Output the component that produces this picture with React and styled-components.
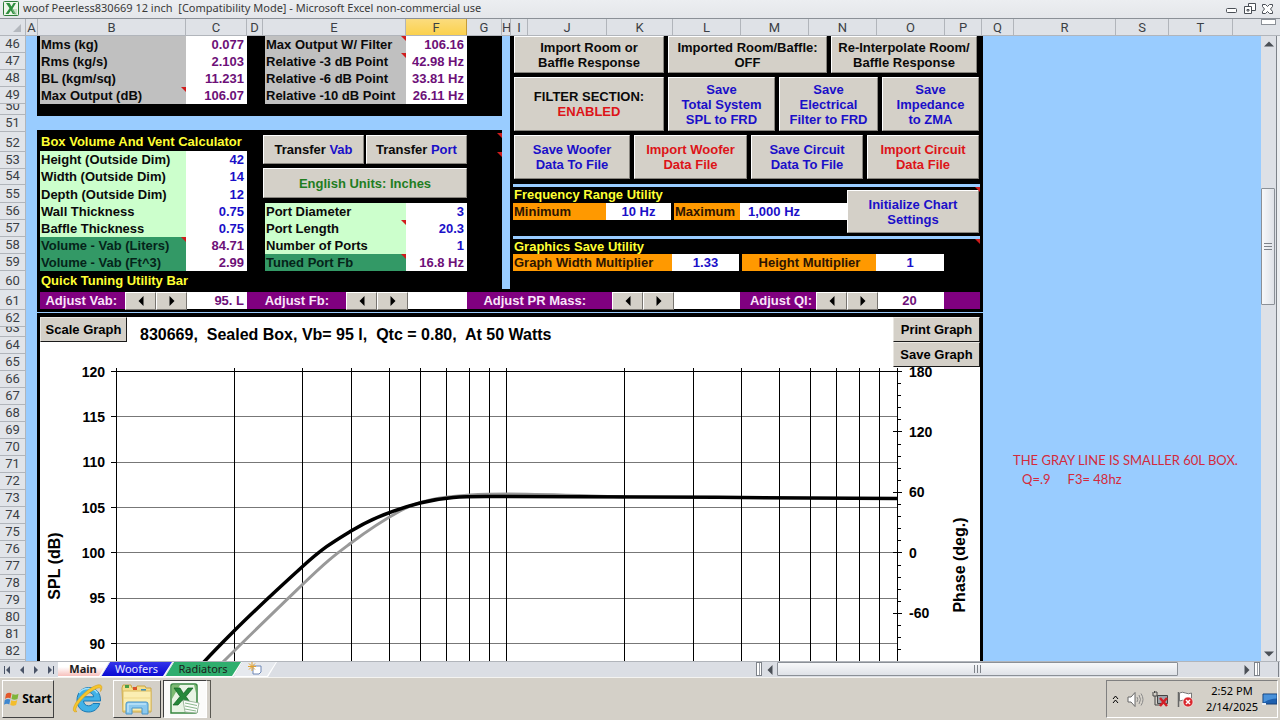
import React from "react";
import styled, { createGlobalStyle, css } from "styled-components";

const GlobalStyle = createGlobalStyle`
  * {
    box-sizing: border-box;
  }
  body {
    margin: 0;
    background: #d4d0c8;
    font-family: "Liberation Sans", Arial, sans-serif;
  }
  button {
    font: inherit;
    color: inherit;
    margin: 0;
    padding: 0;
  }
`;

const colors = {
  blue: "#1a0fc8",
  purple: "#6d1078",
  red: "#dd1418",
  green: "#1f7d1f",
  sky: "#99ccff",
  face: "#d4d0c8"
};

const Window = styled.div`
  display: flex;
  flex-direction: column;
  height: 100vh;
  overflow: hidden;
`;

const TitleBar = styled.header`
  display: flex;
  align-items: center;
  flex: none;
  height: 19px;
  padding: 0 3px;
  background: linear-gradient(#eceef1, #e4e6ea);
  border-bottom: 1px solid #8b9097;
`;

const TitleText = styled.h1`
  flex: 1;
  margin: 0 0 2px 4px;
  color: #3a3a3a;
  font: 400 11px/16px "Noto Sans", "Open Sans", sans-serif;
  white-space: pre;
`;

const WindowButton = styled.button`
  display: flex;
  width: 18px;
  height: 14px;
  align-items: center;
  justify-content: center;
  border: 0;
  background: none;
`;

const ColumnHeads = styled.div`
  display: flex;
  flex: none;
  height: 17px;
  background: #dfe2e7;
  border-bottom: 1px solid #b1b5bb;
`;

const Corner = styled.div`
  display: flex;
  align-items: flex-end;
  justify-content: flex-end;
  width: 26px;
  padding: 0 4px 3px 0;
  border-right: 1px solid #b1b5bb;
`;

const ColumnHead = styled.div`
  flex: none;
  width: ${props => props.$width}px;
  overflow: hidden;
  border-right: 1px solid #b1b5bb;
  color: #3b3f45;
  font: 13px/17px Roboto, "Liberation Sans", sans-serif;
  text-align: center;
  ${props =>
    props.$active &&
    css`
      background: linear-gradient(#fbdc7e, #fbd14d);
      border-right-color: #c59b36;
    `}
`;

const SplitBox = styled.div`
  width: 15px;
  height: 6px;
  margin-left: auto;
  margin-right: 4px;
  border: 1px solid #8b9097;
  background: #fff;
`;

const Sheet = styled.main`
  display: flex;
  flex: 1;
  min-height: 0;
  overflow: hidden;
  background: ${colors.sky};
`;

const RowHeads = styled.div`
  flex: none;
  width: 26px;
  background: #e1e4e9;
  border-right: 1px solid #b1b5bb;
`;

const RowHead = styled.div`
  display: flex;
  align-items: flex-end;
  justify-content: center;
  height: ${props => props.$height}px;
  overflow: hidden;
  border-bottom: 1px solid #b1b5bb;
  color: #3b3f45;
  font: 13px/16px Roboto, "Liberation Sans", sans-serif;
`;

const Board = styled.div`
  display: flex;
  flex-direction: column;
  flex: none;
  width: 946px;
  margin-left: 11px;
  font-size: 13px;
  font-weight: 700;
  line-height: 17px;
`;

const Upper = styled.div`
  display: flex;
  flex: none;
  gap: 8px;
  height: 253px;
`;

const LeftSide = styled.div`
  display: flex;
  flex-direction: column;
  gap: 14px;
  width: 465px;
`;

const ResultsPanel = styled.section`
  display: flex;
  flex: none;
  gap: 18px;
  height: 80px;
  padding-left: 3px;
  background: #000;
`;

const CalculatorPanel = styled.section`
  position: relative;
  z-index: 1;
  display: flex;
  flex: 1;
  min-height: 0;
  gap: 16px;
  padding: 2px 0 0 3px;
  background: #000;
`;

const Heading = styled.h2`
  margin: 0;
  padding-left: 1px;
  color: #ffff33;
  font-size: 13px;
  line-height: ${props => props.$line || 19}px;
  white-space: nowrap;
`;

const DataTable = styled.table`
  align-self: flex-start;
  table-layout: fixed;
  border-collapse: collapse;
`;

const labelFills = {
  gray: "#c0c0c0",
  mint: "#ccffcc",
  pine: "#339966"
};

const LabelCell = styled.th`
  position: relative;
  width: ${props => props.$width}px;
  height: ${props => props.$height || 17}px;
  padding: 0 0 0 1px;
  background: ${props => labelFills[props.$fill]};
  color: ${props => (props.$fill === "pine" ? "#05241a" : "#0a0a0a")};
  text-align: left;
  vertical-align: bottom;
  white-space: nowrap;
`;

const ValueCell = styled.td`
  width: 61px;
  padding: 0 3px 0 0;
  background: #fff;
  color: ${props => colors[props.$color]};
  text-align: right;
  vertical-align: bottom;
  white-space: nowrap;
`;

const CommentMark = styled.i`
  position: absolute;
  top: ${props => props.$top || 0}px;
  right: 0;
  border-top: 5px solid #d01c1c;
  border-left: 5px solid transparent;
`;

const CalculatorColumn = styled.div`
  width: ${props => props.$width}px;
`;

const ButtonStack = styled.div`
  display: flex;
  flex-direction: column;
  gap: 4px;
  margin: 3px 0 5px;
`;

const ButtonRow = styled.div`
  display: flex;
  gap: ${props => props.$gap || 4}px;
`;

const PortReadings = styled.div`
  padding-left: 2px;
`;

const PanelButton = styled.button`
  flex: ${props => (props.$width ? "none" : "1")};
  width: ${props => (props.$width ? `${props.$width}px` : "auto")};
  height: ${props => props.$height}px;
  border: 1px solid;
  border-color: #fff #87847e #87847e #fff;
  background: ${colors.face};
  color: ${props => colors[props.$color] || "#0a0a0a"};
  line-height: 15px;
  white-space: pre-line;
`;

const Tint = styled.span`
  color: ${props => colors[props.$color]};
`;

const RightSide = styled.div`
  flex: 1;
  padding: 0 3px;
  background: #000;
`;

const ActionGrid = styled.div`
  display: flex;
  flex-direction: column;
  gap: 4px;
  padding-left: 1px;
`;

const Utility = styled.section`
  position: relative;
  border-top: 3px solid ${colors.sky};
  margin-top: ${props => props.$space}px;
`;

const UtilityBody = styled.div`
  display: flex;
  height: 49px;
  justify-content: space-between;
`;

const UtilityFields = styled.div`
  display: flex;
  height: 17px;
`;

const FieldLabel = styled.span`
  width: ${props => props.$width}px;
  padding-left: 1px;
  margin-left: ${props => (props.$apart ? 3 : 0)}px;
  background: #ff9900;
  color: #2c1400;
  text-align: ${props => (props.$centered ? "center" : "left")};
  white-space: nowrap;
`;

const FieldValue = styled.output`
  width: ${props => props.$width}px;
  padding: 0 8px;
  background: #fff;
  color: ${colors.blue};
  text-align: ${props => props.$align || "center"};
`;

const InitButton = styled(PanelButton)`
  margin: 3px 1px 0 0;
`;

const TuningBar = styled.section`
  display: flex;
  flex: none;
  height: 23px;
  margin-bottom: 1px;
  padding: 3px 3px 0;
  background: #000;
`;

const TuningLabel = styled.span`
  width: ${props => props.$width}px;
  height: 17px;
  padding-right: ${props => props.$pad}px;
  background: #800080;
  color: #f9e4f9;
  text-align: right;
  white-space: nowrap;
`;

const TuningValue = styled.output`
  width: ${props => props.$width}px;
  height: 17px;
  padding-right: 3px;
  background: #fff;
  color: ${colors.purple};
  text-align: ${props => props.$align || "right"};
`;

const SpinButton = styled.button`
  display: flex;
  width: 31px;
  height: 18px;
  align-items: center;
  justify-content: center;
  border: 1px solid;
  border-color: #fff #77746f #77746f #fff;
  background: ${colors.face};
`;

const Graph = styled.section`
  flex: 1;
  min-height: 0;
  overflow: hidden;
  border: solid #000;
  border-width: 4px 3px 0;
  background: #fff;
`;

/* shorter than its buttons: the lower one lies over the top of the chart */
const GraphHeader = styled.div`
  position: relative;
  z-index: 1;
  display: flex;
  height: 43px;
  align-items: flex-start;
`;

const GraphTitle = styled.h2`
  flex: 1;
  margin: 8px 0 0 13px;
  font-size: 16px;
  line-height: 20px;
  white-space: pre;
`;

const GraphButton = styled.button`
  display: block;
  width: 87px;
  height: 25px;
  border: 1px solid;
  border-color: #e9e7e2 #1a1a1a #1a1a1a #e9e7e2;
  background: ${colors.face};
  line-height: 15px;
`;

const Chart = styled.svg`
  display: block;
  width: 100%;
  height: 301px;
  font: 700 14px "Liberation Sans", Arial, sans-serif;
`;

const Notes = styled.aside`
  flex: 1;
  min-width: 0;
  padding: 415px 0 0 30px;
  color: #d42a3c;
  font: 13px/19px Lato, "Liberation Sans", sans-serif;
  white-space: nowrap;
  p {
    margin: 0;
  }
`;

const NoteRow = styled.div`
  display: flex;
  gap: 17px;
  padding-left: 9px;
`;

const VerticalScroll = styled.div`
  display: flex;
  flex: none;
  flex-direction: column;
  width: 19px;
  border-right: 3px solid #eceef1;
  background: #dde0e6;
  box-shadow: inset -1px 0 #7d8289;
`;

const ScrollArrow = styled.button`
  display: flex;
  flex: none;
  width: 15px;
  height: 15px;
  align-items: center;
  justify-content: center;
  border: 0;
  background: none;
`;

const VerticalTrack = styled.div`
  flex: 1;
  padding-top: 137px;
`;

const VerticalThumb = styled.div`
  display: flex;
  width: 14px;
  height: 117px;
  align-items: center;
  justify-content: center;
  border: 1px solid #8b9097;
  border-radius: 1px;
  background: linear-gradient(90deg, #f7f8fa, #dfe2e8);
`;

const SheetBar = styled.nav`
  display: flex;
  flex: none;
  height: 16px;
  background: #dbdee4;
  border-top: 1px solid #b1b5bb;
`;

const SheetNav = styled.div`
  display: flex;
  width: 58px;
  align-items: center;
  justify-content: space-around;
`;

const NavButton = styled.button`
  display: flex;
  border: 0;
  background: none;
`;

const tabFills = {
  Main: "linear-gradient(#fff 35%, #f7c0bc)",
  Woofers: "linear-gradient(#3434ea, #0a0ad2)",
  Radiators: "linear-gradient(#2fae6e, #2fae6e)",
  New: "#e6e9ee"
};

const TabWrap = styled.span`
  width: ${props => props.$width}px;
  height: 15px;
  margin-right: -8px;
  padding-right: 1px;
  background: #fff;
  clip-path: polygon(
    ${props => (props.$first ? 0 : 9)}px 0,
    100% 0,
    calc(100% - 9px) 100%,
    0 100%
  );
`;

const Tab = styled.button`
  display: block;
  width: 100%;
  height: 14px;
  border: 0;
  background: ${props => tabFills[props.$name]};
  clip-path: polygon(
    ${props => (props.$name === "Main" ? 0 : 9)}px 0,
    100% 0,
    calc(100% - 9px) 100%,
    0 100%
  );
  color: ${props => (props.$name === "Woofers" ? "#e8e8ff" : "#1c1c1c")};
  font: ${props => (props.$name === "Main" ? 700 : 400)} 11px/14px "Noto Sans",
    sans-serif;
  text-align: center;
`;

const HorizontalScroll = styled.div`
  display: flex;
  flex: 0 1 523px;
  margin-left: auto;
  margin-right: 1px;
  padding-right: 18px;
  border-right: 1px solid #7d8289;
`;

const Splitter = styled.div`
  flex: none;
  width: 6px;
  height: 14px;
  border: 1px solid #7d8289;
  background: linear-gradient(90deg, #fff 50%, #9a9ea5 50%, #9a9ea5 75%, #fff 75%);
`;

const HorizontalThumb = styled.div`
  display: flex;
  flex: 0 1 401px;
  height: 14px;
  align-items: center;
  justify-content: center;
  border: 1px solid #8b9097;
  border-radius: 1px;
  background: linear-gradient(#f7f8fa, #dfe2e8);
`;

const HorizontalGap = styled.div`
  flex: 1;
`;

const Taskbar = styled.footer`
  display: flex;
  flex: none;
  height: 43px;
  padding: 2px 2px 2px;
  border-top: 1px solid #f4f3f0;
  background: ${colors.face};
`;

const TaskButton = styled.button`
  display: flex;
  width: ${props => props.$width}px;
  height: 38px;
  margin-right: ${props => props.$after || 0}px;
  align-items: center;
  justify-content: center;
  gap: 2px;
  border: ${props => (props.$flat ? 0 : "1px solid")};
  border-color: ${props =>
    props.$pressed ? "#404040 #fff #fff #404040" : "#fff #404040 #404040 #fff"};
  background: ${props => (props.$pressed ? "#fbfbfa" : "none")};
  font: 700 12px/16px "Noto Sans", sans-serif;
`;

const StackEdge = styled.span`
  width: 4px;
  height: 38px;
  border: solid #5a5852;
  border-width: 1px 1px 0 0;
`;

const Tray = styled.div`
  display: flex;
  flex: none;
  width: 172px;
  height: 38px;
  margin-left: auto;
  align-items: center;
  border: 1px solid;
  border-color: #808080 #fff #fff #808080;
`;

const TrayIcons = styled.div`
  display: flex;
  flex: 1;
  align-items: center;
  justify-content: space-between;
  padding: 0 8px 0 5px;
`;

const Clock = styled.time`
  width: 60px;
  font: 11px/16px "Noto Sans", sans-serif;
  text-align: center;
`;

const columns = [
  ["A", 12], ["B", 148], ["C", 61], ["D", 16], ["E", 143], ["F", 61],
  ["G", 35], ["H", 9], ["I", 17], ["J", 79], ["K", 66], ["L", 68],
  ["M", 68], ["N", 68], ["O", 68], ["P", 37], ["Q", 32], ["R", 102],
  ["S", 53], ["T", 64]
];

const oddHeights = { 50: 11, 52: 20, 54: 16, 55: 18, 60: 19, 61: 20, 63: 10 };
const rows = Array.from({ length: 37 }, (_, i) => ({
  number: 46 + i,
  height: oddHeights[46 + i] || 17
}));

const driverRows = [
  { label: "Mms (kg)", value: "0.077" },
  { label: "Rms (kg/s)", value: "2.103" },
  { label: "BL (kgm/sq)", value: "11.231" },
  { label: "Max Output (dB)", value: "106.07", mark: true }
];

const outputRows = [
  { label: "Max Output W/ Filter", value: "106.16", mark: true },
  { label: "Relative -3 dB Point", value: "42.98 Hz", mark: true },
  { label: "Relative -6 dB Point", value: "33.81 Hz" },
  { label: "Relative -10 dB Point", value: "26.11 Hz" }
];

const boxRows = [
  { label: "Height (Outside Dim)", value: "42", input: true },
  { label: "Width (Outside Dim)", value: "14", input: true },
  { label: "Depth (Outside Dim)", value: "12", input: true, height: 18 },
  { label: "Wall Thickness", value: "0.75", input: true },
  { label: "Baffle Thickness", value: "0.75", input: true },
  { label: "Volume - Vab (Liters)", value: "84.71", mark: true },
  { label: "Volume - Vab (Ft^3)", value: "2.99" }
];

const portRows = [
  { label: "Port Diameter", value: "3", input: true },
  { label: "Port Length", value: "20.3", input: true, mark: true },
  { label: "Number of Ports", value: "1", input: true },
  { label: "Tuned Port Fb", value: "16.8 Hz", mark: true }
];

const Readings = ({ rows: items, width, plain }) => (
  <DataTable>
    <tbody>
      {items.map(item => (
        <tr key={item.label}>
          <LabelCell
            scope="row"
            $width={width}
            $height={item.height}
            $fill={plain ? "gray" : item.input ? "mint" : "pine"}
          >
            {item.label}
            {item.mark && <CommentMark />}
          </LabelCell>
          <ValueCell $color={item.input ? "blue" : "purple"}>
            {item.value}
          </ValueCell>
        </tr>
      ))}
    </tbody>
  </DataTable>
);

const Arrow = ({ dir, size = 8, fill = "#000" }) => {
  const paths = {
    left: "M6 0V8L2 4Z",
    right: "M2 0V8L6 4Z",
    up: "M0 6H8L4 2Z",
    down: "M0 2H8L4 6Z"
  };
  return (
    <svg width={size} height={size} viewBox="0 0 8 8" aria-hidden="true">
      <path d={paths[dir]} fill={fill} />
    </svg>
  );
};

const Spinner = ({ name }) => (
  <>
    <SpinButton aria-label={`Decrease ${name}`}>
      <Arrow dir="left" size={10} />
    </SpinButton>
    <SpinButton aria-label={`Increase ${name}`}>
      <Arrow dir="right" size={10} />
    </SpinButton>
  </>
);

const ExcelSmall = () => (
  <svg width="16" height="16" viewBox="0 0 16 16" aria-hidden="true">
    <rect x=".5" y=".5" width="15" height="14" rx="1" fill="#eef6ea" stroke="#2e7d3a" />
    <path d="M3 2h3.500l2 3.500L10.500 2H13L9.700 7.500 13 13H9.800L7.800 9.500 5.500 13H2.500l4-5.700z" fill="#2f8f3f" />
    <path d="M9 9h5M10 11h4M11 13h3" stroke="#9cc79f" />
  </svg>
);

const StartFlag = () => (
  <svg width="16" height="16" viewBox="0 0 16 16" aria-hidden="true">
    <path d="M2 3c2-1.500 4-1.500 5.500-.5L6.500 7.500C5 6.500 3 6.500 1 8z" fill="#e2582b" />
    <path d="M8.500 3c2 1 4 1 6-.3L13.500 8c-2 1-4 1-6 0z" fill="#7fb53a" />
    <path d="M.8 9c2-1.400 4-1.400 5.500-.4L5.300 13.500c-1.500-1-3.500-1-5.300.3z" fill="#3f87cf" />
    <path d="M7.300 9.200c2 1 4 1 6-.2l-1.200 5c-2 1-4 1-5.800 0z" fill="#f3bd2b" />
  </svg>
);

const ExplorerGlobe = () => (
  <svg width="32" height="32" viewBox="0 0 32 32" aria-hidden="true">
    <path d="M28.500 18H11.500c.3 3 2.300 4.800 5 4.800 2 0 3.500-.8 4.500-2.300h6.700C26 26 21.800 29 16.500 29 9.500 29 5 24 5 17S10 4.500 16.700 4.500C24 4.500 28.800 10 28.500 18zM11.700 13.800h10c-.4-2.800-2.300-4.300-4.900-4.300-2.700 0-4.600 1.600-5.100 4.300z" fill="#41b1e6" stroke="#1878b4" />
    <path d="M7 10c2-3 5.500-4.500 9.500-4.500 4 0 7 1.500 9 4.500" fill="none" stroke="#9fe0fa" strokeWidth="1.500" />
    <path d="M5 28.500C1 30-.3 26.500 4 19.500 9 12 19 3.500 25.500 2c4.500-1 5.500 2 3 6.500 1-3.500-.5-4.500-4-3C17 8.500 8 17.500 5 23c-1.800 3.200-1.800 5.200 0 5.500z" fill="#f6c62c" stroke="#d99d12" strokeWidth=".6" />
  </svg>
);

const FolderIcon = () => (
  <svg width="34" height="32" viewBox="0 0 34 32" aria-hidden="true">
    <path d="M2 5l1-3h8l1 3h4l1-2h8l1 2h5v24H3z" fill="#f4dd8a" stroke="#c9a545" />
    <path d="M5 2h4v3H5z" fill="#4b9e46" />
    <path d="M13 4h4v3h-4z" fill="#d9542c" />
    <path d="M21 6h5v2h-5z" fill="#3b8fc0" />
    <path d="M3 8h28v20H3z" fill="#fbeeb2" stroke="#dcbd62" />
    <path d="M4 15h26" stroke="#f0d98b" />
    <path d="M6 31V21q0-2 2-2h18q2 0 2 2v10h-6v-6H12v6z" fill="#8cc9ee" stroke="#4a94c8" />
    <path d="M8 29v-8h18" fill="none" stroke="#d6f1ff" />
  </svg>
);

const ExcelLarge = () => (
  <svg width="32" height="32" viewBox="0 0 32 32" aria-hidden="true">
    <path d="M2 3q0-2 2-2h22q2 0 2 2v25q0 2-2 2H2z" fill="#e8f4e4" stroke="#37873f" strokeWidth="1.500" />
    <path d="M3 2h8L3 16zM25 2h2v8z" fill="#7dbb72" />
    <path d="M5 5h6l3.500 5.500L19 5h5l-7 8.500L23 22h-6l-3.500-5L9 22H4l7-8.500z" fill="#26883a" stroke="#125f22" strokeWidth=".7" />
    <path d="M14 17l16 3-2 10-12-1z" fill="#fbfdfb" stroke="#8ba88c" strokeWidth=".8" />
    <path d="M16 20l12 2.500M16 23l12 2.500M16 26l11 2" stroke="#8bb88d" />
  </svg>
);

const SpeakerIcon = () => (
  <svg width="17" height="17" viewBox="0 0 17 17" fill="none" aria-hidden="true">
    <path d="M1 6h3l4-4.500v14L4 11H1z" fill="#fff" stroke="#666" />
    <path d="M10 6q1.500 2.500 0 5M12 4q3 4.500 0 9M14 2.500q4 6 0 12" stroke="#8a8a8a" />
  </svg>
);

const NetworkIcon = () => (
  <svg width="17" height="17" viewBox="0 0 17 17" fill="none" aria-hidden="true">
    <path d="M5.500 4.500h10v8h-10z" fill="#9da4ab" stroke="#444" />
    <path d="M1 1v4h4V1M3 5v9h5M2.500 0v2M4 0v2" stroke="#444" />
    <path d="M8 7l7 8M15 7l-7 8" stroke="#d21f26" strokeWidth="2.500" />
  </svg>
);

const FlagIcon = () => (
  <svg width="17" height="17" viewBox="0 0 17 17" fill="none" aria-hidden="true">
    <path d="M1.500 1v15" stroke="#666" strokeWidth="1.500" />
    <path d="M2.500 2q3-1.500 6 0t6 0v8q-3 1.500-6 0t-6 0z" fill="#fff" stroke="#777" />
    <circle cx="11" cy="11" r="5" fill="#d9282e" stroke="#fff" strokeWidth=".6" />
    <path d="M9 9l4 4M13 9l-4 4" stroke="#fff" strokeWidth="1.500" />
  </svg>
);

const DesktopIcon = () => (
  <svg width="15" height="14" viewBox="0 0 15 14" aria-hidden="true">
    <path d="M1 2h14v10H1z" fill="#1d5fae" stroke="#123e78" />
    <path d="M1.500 2.500h13v4q-6 0-13 4z" fill="#4a92da" />
    <path d="M0 11h4v2H0z" fill="#e8eef5" />
  </svg>
);

const DECADE = 390.4;
const freqX = f => 116.5 + Math.log10(f / 10) * DECADE;
const gridFreqs = [
  20, 30, 40, 50, 60, 70, 80, 90, 100, 200, 300, 400, 500, 600, 700, 800, 900,
  1000
];
const splLevels = [120, 115, 110, 105, 100, 95, 90];
const splY = level => 371.5 + (120 - level) * 9.07;
const phaseY = deg => 371.5 + (180 - deg) * 1.008;
const phaseTicks = Array.from({ length: 24 }, (_, i) => 180 - i * 12);

const ResponseChart = () => (
  <Chart
    viewBox="40 360 940 301"
    preserveAspectRatio="xMinYMin meet"
    role="img"
    aria-label="SPL and phase response"
  >
    <g shapeRendering="crispEdges" stroke="#000">
      {splLevels.map(level => (
        <g key={level}>
          <path
            d={`M117 ${splY(level)}H897`}
            stroke={level === 120 ? "#000" : "#777"}
          />
          <path d={`M111 ${splY(level)}h6`} />
        </g>
      ))}
      <path d="M116.500 368V661" />
      {gridFreqs.map(f => (
        <path key={f} d={`M${freqX(f)} 368V661`} />
      ))}
      {phaseTicks.map(deg => (
        <path
          key={deg}
          d={deg % 60 === 0 ? `M893 ${phaseY(deg)}h9` : `M897 ${phaseY(deg)}h4`}
        />
      ))}
    </g>
    <path
      d="M222 663C250 635 275 611 302 585S335 555 351 543 380 522 400 511 440 497 470 495 540 494 624 497"
      fill="none"
      stroke="#999"
      strokeWidth="3"
    />
    <path
      d="M203 663C213 652 222 643 233 632S280 587 302 567 333 542 351 531 389 511 420 503 470 497 506 496.500 800 498 897 498.500"
      fill="none"
      stroke="#000"
      strokeWidth="3.500"
    />
    <g textAnchor="end">
      {splLevels.map(level => (
        <text key={level} x="105" y={splY(level) + 5}>
          {level}
        </text>
      ))}
    </g>
    {[180, 120, 60, 0, -60].map(deg => (
      <text key={deg} x="909" y={phaseY(deg) + 5}>
        {deg}
      </text>
    ))}
    <g textAnchor="middle" fontSize="16">
      <text transform="translate(60 566) rotate(-90)">SPL (dB)</text>
      <text transform="translate(965 565) rotate(-90)">Phase (deg.)</text>
    </g>
  </Chart>
);

const App = () => (
  <Window>
    <GlobalStyle />
    <TitleBar>
      <ExcelSmall />
      <TitleText>
        {
          "woof Peerless830669 12 inch  [Compatibility Mode] - Microsoft Excel non-commercial use"
        }
      </TitleText>
      <WindowButton aria-label="Minimize">
        <svg width="12" height="12" fill="#fff" stroke="#4a4f56">
          <rect x=".5" y="5.500" width="10" height="4" rx="1" />
        </svg>
      </WindowButton>
      <WindowButton aria-label="Restore">
        <svg width="13" height="12" fill="#fff" stroke="#4a4f56">
          <path d="M4.500 .5h7v7h-7z" />
          <path d="M.5 3.500h7v7h-7z" />
          <path d="M3 6.500h2v1.500H3z" />
        </svg>
      </WindowButton>
      <WindowButton aria-label="Close">
        <svg width="12" height="12" fill="#fff" stroke="#4a4f56">
          <path d="M.5 1.500h3l2 2 2-2h3v2l-2 2.500 2 2.500v2h-3l-2-2-2 2h-3v-2l2-2.500-2-2.500z" />
        </svg>
      </WindowButton>
    </TitleBar>
    <ColumnHeads>
      <Corner>
        <svg width="8" height="8" aria-hidden="true">
          <path d="M8 0V8H0Z" fill="#b4b8be" />
        </svg>
      </Corner>
      {columns.map(([name, width]) => (
        <ColumnHead key={name} $width={width} $active={name === "F"}>
          {name}
        </ColumnHead>
      ))}
      <SplitBox />
    </ColumnHeads>
    <Sheet>
      <RowHeads>
        {rows.map(row => (
          <RowHead key={row.number} $height={row.height}>
            {row.number}
          </RowHead>
        ))}
      </RowHeads>
      <Board>
        <Upper>
          <LeftSide>
            <ResultsPanel>
              <Readings rows={driverRows} width={146} plain />
              <Readings rows={outputRows} width={141} plain />
            </ResultsPanel>
            <CalculatorPanel>
              <CalculatorColumn $width={207}>
                <Heading>Box Volume And Vent Calculator</Heading>
                <Readings rows={boxRows} width={146} />
                <Heading>Quick Tuning Utility Bar</Heading>
              </CalculatorColumn>
              <CalculatorColumn $width={204}>
                <ButtonStack>
                  <ButtonRow $gap={2}>
                    <PanelButton $height={29}>
                      Transfer <Tint $color="blue">Vab</Tint>
                    </PanelButton>
                    <PanelButton $height={29}>
                      Transfer <Tint $color="blue">Port</Tint>
                    </PanelButton>
                  </ButtonRow>
                  <ButtonRow>
                    <PanelButton $height={30} $color="green">
                      English Units: Inches
                    </PanelButton>
                  </ButtonRow>
                </ButtonStack>
                <PortReadings>
                  <Readings rows={portRows} width={141} />
                </PortReadings>
              </CalculatorColumn>
              <CommentMark $top={3} />
              <CommentMark $top={22} />
            </CalculatorPanel>
          </LeftSide>
          <RightSide>
            <ActionGrid>
              <ButtonRow>
                <PanelButton $width={150} $height={37}>
                  {"Import Room or\nBaffle Response"}
                </PanelButton>
                <PanelButton $width={159} $height={37}>
                  {"Imported Room/Baffle:\nOFF"}
                </PanelButton>
                <PanelButton $width={146} $height={37}>
                  {"Re-Interpolate Room/\nBaffle Response"}
                </PanelButton>
              </ButtonRow>
              <ButtonRow>
                <PanelButton $width={150} $height={54}>
                  {"FILTER SECTION:\n"}
                  <Tint $color="red">ENABLED</Tint>
                </PanelButton>
                <PanelButton $width={107} $height={54} $color="blue">
                  {"Save\nTotal System\nSPL to FRD"}
                </PanelButton>
                <PanelButton $width={99} $height={54} $color="blue">
                  {"Save\nElectrical\nFilter to FRD"}
                </PanelButton>
                <PanelButton $width={97} $height={54} $color="blue">
                  {"Save\nImpedance\nto ZMA"}
                </PanelButton>
              </ButtonRow>
              <ButtonRow>
                <PanelButton $width={116} $height={44} $color="blue">
                  {"Save Woofer\nData To File"}
                </PanelButton>
                <PanelButton $width={113} $height={44} $color="red">
                  {"Import Woofer\nData File"}
                </PanelButton>
                <PanelButton $width={112} $height={44} $color="blue">
                  {"Save Circuit\nData To File"}
                </PanelButton>
                <PanelButton $width={112} $height={44} $color="red">
                  {"Import Circuit\nData File"}
                </PanelButton>
              </ButtonRow>
            </ActionGrid>
            <Utility $space={5}>
              <UtilityBody>
                <div>
                  <Heading $line={16}>Frequency Range Utility</Heading>
                  <UtilityFields>
                    <FieldLabel $width={93}>Minimum</FieldLabel>
                    <FieldValue $width={65}>10 Hz</FieldValue>
                    <FieldLabel $width={66} $apart>Maximum</FieldLabel>
                    <FieldValue $width={107} $align="left">1,000 Hz</FieldValue>
                  </UtilityFields>
                </div>
                <InitButton $width={132} $height={43} $color="blue">
                  {"Initialize Chart\nSettings"}
                </InitButton>
              </UtilityBody>
              <CommentMark />
            </Utility>
            <Utility $space={0}>
              <Heading $line={15}>Graphics Save Utility</Heading>
              <UtilityFields>
                <FieldLabel $width={159}>Graph Width Multiplier</FieldLabel>
                <FieldValue $width={67}>1.33</FieldValue>
                <FieldLabel $width={134} $apart $centered>
                  Height Multiplier
                </FieldLabel>
                <FieldValue $width={68}>1</FieldValue>
              </UtilityFields>
              <CommentMark />
            </Utility>
          </RightSide>
        </Upper>
        <TuningBar>
          <TuningLabel $width={85} $pad={8}>Adjust Vab:</TuningLabel>
          <Spinner name="Vab" />
          <TuningValue $width={60}>95. L</TuningValue>
          <TuningLabel $width={99} $pad={17}>Adjust Fb:</TuningLabel>
          <Spinner name="Fb" />
          <TuningValue $width={59} />
          <TuningLabel $width={145} $pad={26}>Adjust PR Mass:</TuningLabel>
          <Spinner name="PR Mass" />
          <TuningValue $width={66} />
          <TuningLabel $width={76} $pad={4}>Adjust Ql:</TuningLabel>
          <Spinner name="Ql" />
          <TuningValue $width={66} $align="center">20</TuningValue>
          <TuningLabel $width={36} $pad={0} />
        </TuningBar>
        <Graph>
          <GraphHeader>
            <GraphButton>Scale Graph</GraphButton>
            <GraphTitle>
              {"830669,  Sealed Box, Vb= 95 l,  Qtc = 0.80,  At 50 Watts"}
            </GraphTitle>
            <div>
              <GraphButton>Print Graph</GraphButton>
              <GraphButton>Save Graph</GraphButton>
            </div>
          </GraphHeader>
          <ResponseChart />
        </Graph>
      </Board>
      <Notes>
        <p>THE GRAY LINE IS SMALLER 60L BOX.</p>
        <NoteRow>
          <p>Q=.9</p>
          <p>F3= 48hz</p>
        </NoteRow>
      </Notes>
      <VerticalScroll>
        <ScrollArrow aria-label="Scroll up">
          <Arrow dir="up" size={10} fill="#4a4f56" />
        </ScrollArrow>
        <VerticalTrack>
          <VerticalThumb>
            <svg width="8" height="8" stroke="#7d8289">
              <path d="M0 .5h8M0 3.500h8M0 6.500h8" />
            </svg>
          </VerticalThumb>
        </VerticalTrack>
        <ScrollArrow aria-label="Scroll down">
          <Arrow dir="down" size={10} fill="#4a4f56" />
        </ScrollArrow>
      </VerticalScroll>
    </Sheet>
    <SheetBar>
      <SheetNav>
        <NavButton aria-label="First sheet">
          <svg width="8" height="8" fill="#4a5468">
            <path d="M1 0h1v8H1zM7 0v8L3 4z" />
          </svg>
        </NavButton>
        <NavButton aria-label="Previous sheet">
          <Arrow dir="left" fill="#4a5468" />
        </NavButton>
        <NavButton aria-label="Next sheet">
          <Arrow dir="right" fill="#4a5468" />
        </NavButton>
        <NavButton aria-label="Last sheet">
          <svg width="8" height="8" fill="#4a5468">
            <path d="M6 0h1v8H6zM1 0v8L5 4z" />
          </svg>
        </NavButton>
      </SheetNav>
      <TabWrap $width={51} $first>
        <Tab $name="Main">Main</Tab>
      </TabWrap>
      <TabWrap $width={72}>
        <Tab $name="Woofers">Woofers</Tab>
      </TabWrap>
      <TabWrap $width={77}>
        <Tab $name="Radiators">Radiators</Tab>
      </TabWrap>
      <TabWrap $width={43}>
        <Tab $name="New" aria-label="Insert worksheet">
          <svg width="16" height="14" viewBox="0 0 16 14" fill="none">
            <path d="M6 4h8v6l-2 2H6z" fill="#fff" stroke="#6d86b5" />
            <path d="M5 0v9M1 4.500h8M2 1.500l6 6M8 1.500l-6 6" stroke="#e2a12e" />
          </svg>
        </Tab>
      </TabWrap>
      <HorizontalScroll>
        <Splitter />
        <ScrollArrow aria-label="Scroll left">
          <Arrow dir="left" size={10} fill="#4a4f56" />
        </ScrollArrow>
        <HorizontalThumb>
          <svg width="8" height="8" stroke="#7d8289">
            <path d="M.5 0v8M3.500 0v8M6.500 0v8" />
          </svg>
        </HorizontalThumb>
        <HorizontalGap />
        <ScrollArrow aria-label="Scroll right">
          <Arrow dir="right" size={10} fill="#4a4f56" />
        </ScrollArrow>
        <Splitter />
      </HorizontalScroll>
    </SheetBar>
    <Taskbar>
      <TaskButton $width={52} $after={11}>
        <StartFlag />
        Start
      </TaskButton>
      <TaskButton $width={46} $after={2} $flat aria-label="Internet Explorer">
        <ExplorerGlobe />
      </TaskButton>
      <TaskButton $width={48} $after={2} aria-label="Windows Explorer">
        <FolderIcon />
      </TaskButton>
      <TaskButton $width={44} $pressed aria-label="Microsoft Excel">
        <ExcelLarge />
      </TaskButton>
      <StackEdge />
      <Tray>
        <TrayIcons>
          <svg width="7" height="9" fill="none" stroke="#000" aria-hidden="true">
            <path d="M1 4l2.500-3L6 4M1 8l2.500-3L6 8" />
          </svg>
          <SpeakerIcon />
          <NetworkIcon />
          <FlagIcon />
        </TrayIcons>
        <Clock>
          2:52 PM
          <br />
          2/14/2025
        </Clock>
        <DesktopIcon />
      </Tray>
    </Taskbar>
  </Window>
);

export default App;
